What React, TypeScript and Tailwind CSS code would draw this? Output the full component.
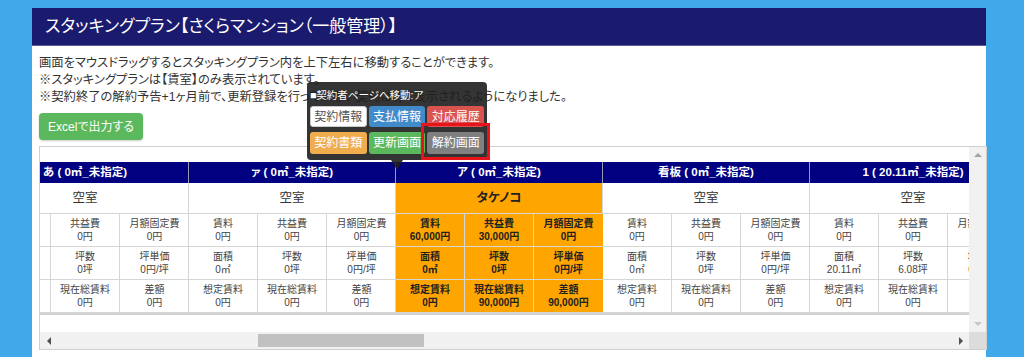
import React from 'react';

type Cell = { label: string; value: string };
type Group = { title: string; status: string; rows: Cell[][]; active?: boolean };

const empty = (area: string, tsubo: string): Cell[][] => [
    [{ label: '賃料', value: '0円' }, { label: '共益費', value: '0円' }, { label: '月額固定費', value: '0円' }],
    [{ label: '面積', value: area }, { label: '坪数', value: tsubo }, { label: '坪単価', value: '0円/坪' }],
    [{ label: '想定賃料', value: '0円' }, { label: '現在総賃料', value: '0円' }, { label: '差額', value: '0円' }],
];

const groups: Group[] = [
    { title: 'あ ( 0㎡_未指定)', status: '空室', rows: empty('0㎡', '0坪') },
    { title: 'ァ ( 0㎡_未指定)', status: '空室', rows: empty('0㎡', '0坪') },
    {
        title: 'ア ( 0㎡_未指定)',
        status: 'タケノコ',
        active: true,
        rows: [
            [{ label: '賃料', value: '60,000円' }, { label: '共益費', value: '30,000円' }, { label: '月額固定費', value: '0円' }],
            [{ label: '面積', value: '0㎡' }, { label: '坪数', value: '0坪' }, { label: '坪単価', value: '0円/坪' }],
            [{ label: '想定賃料', value: '0円' }, { label: '現在総賃料', value: '90,000円' }, { label: '差額', value: '90,000円' }],
        ],
    },
    { title: '看板 ( 0㎡_未指定)', status: '空室', rows: empty('0㎡', '0坪') },
    {
        title: '1 ( 20.11㎡_未指定)',
        status: '空室',
        rows: [
            [{ label: '賃料', value: '0円' }, { label: '共益費', value: '0円' }, { label: '月額固定費', value: '0円' }],
            [{ label: '面積', value: '20.11㎡' }, { label: '坪数', value: '6.08坪' }, { label: '坪単価', value: '0円/坪' }],
            [{ label: '想定賃料', value: '0円' }, { label: '現在総賃料', value: '0円' }, { label: '差額', value: '' }],
        ],
    },
];

function GroupColumn({ g }: { g: Group }) {
    return (
        <div className="flex flex-col w-[207px] shrink-0 border-r border-[#d6d6d6]">
            <div className="h-[21px] bg-[#000080] text-white font-bold text-[11.5px] flex items-center justify-center whitespace-nowrap border-r border-[#9a9ab8] -mr-px">
                {g.title}
            </div>
            <div
                className={`h-[31px] flex items-center justify-center text-[12.5px] border-b border-[#d6d6d6] ${
                    g.active ? 'bg-[#ffa500] font-bold text-[#222]' : 'bg-white text-[#333]'
                }`}
            >
                {g.status}
            </div>
            {g.rows.map((row, ri) => (
                <div key={ri} className="h-[33px] flex border-b border-[#d6d6d6]">
                    {row.map((c, ci) => (
                        <div
                            key={ci}
                            className={`w-[69px] shrink-0 flex flex-col items-center justify-center text-[10px] leading-[13px] whitespace-nowrap ${
                                ci < 2 ? 'border-r border-[#d6d6d6]' : ''
                            } ${g.active ? 'bg-[#ffa500] font-bold text-[#222]' : 'text-[#444]'}`}
                        >
                            {c.value !== '' && (
                                <>
                                    <span>{c.label}</span>
                                    <span>{c.value}</span>
                                </>
                            )}
                        </div>
                    ))}
                </div>
            ))}
        </div>
    );
}

export default function App() {
    return (
        <div className="min-h-[357px] bg-[#3fa9ea] pt-[8px] font-['Liberation_Sans','Noto_Sans_CJK_JP',sans-serif] [font-feature-settings:'palt'] relative overflow-hidden">
            <div className="ml-[32px] w-[954px] bg-white h-[349px]">
                <div className="h-[38px] bg-[#1a1a6e] flex items-center pl-[13px] text-white text-[17px] border-b border-[#5a5a9a]">
                    スタッキングプラン【さくらマンション（一般管理）】
                </div>
                <div className="pl-[7px] pr-[7px] pt-[9px]">
                    <div className="text-[12.3px] leading-[17px] text-[#333]">
                        <p>画面をマウスドラッグするとスタッキングプラン内を上下左右に移動することができます。</p>
                        <p>※スタッキングプランは【賃室】のみ表示されています。</p>
                        <p>※契約終了の解約予告+1ヶ月前で、更新登録を行っていない契約は赤く表示されるようになりました。</p>
                    </div>
                    <button className="mt-[7px] w-[104px] h-[27px] bg-[#5cb85c] rounded-[4px] text-white text-[12px] shadow-[0_1px_2px_rgba(0,0,0,0.2)]">
                        Excelで出力する
                    </button>
                    <div className="mt-[6px] w-[948px] h-[204px] border border-[#cfcfcf] flex flex-col">
                        <div className="flex flex-1 min-h-0">
                            <div className="flex-1 overflow-hidden">
                                <div className="h-[15px]" />
                                <div className="flex ml-[-58px] border-b-2 border-[#d0d0d0] w-max">
                                    {groups.map((g, i) => (
                                        <GroupColumn key={i} g={g} />
                                    ))}
                                </div>
                            </div>
                            <div className="w-[17px] bg-[#f1f1f1] flex flex-col items-center justify-between py-[6px]">
                                <div className="w-0 h-0 border-x-[4px] border-x-transparent border-b-[4px] border-b-[#a3a3a3]" />
                                <div className="w-0 h-0 border-x-[4px] border-x-transparent border-t-[4px] border-t-[#c8c8c8]" />
                            </div>
                        </div>
                        <div className="h-[17px] flex">
                            <div className="flex-1 bg-[#f1f1f1] flex items-center">
                                <div className="w-[17px] flex justify-center">
                                    <div className="w-0 h-0 border-y-[4px] border-y-transparent border-r-[4px] border-r-[#505050]" />
                                </div>
                                <div className="ml-[201px] w-[166px] h-[13px] bg-[#c1c1c1]" />
                                <div className="flex-1" />
                                <div className="w-[17px] flex justify-center">
                                    <div className="w-0 h-0 border-y-[4px] border-y-transparent border-l-[4px] border-l-[#505050]" />
                                </div>
                            </div>
                            <div className="w-[17px] bg-[#dcdcdc]" />
                        </div>
                    </div>
                </div>
            </div>

            {/* popover over the table */}
            <div className="absolute left-[307px] top-[82px] w-[180px] h-[78px] bg-[#1e1e1e]/90 rounded-[4px] px-[3px] pt-[5px]">
                <div className="text-white text-[10.5px] leading-[16px] whitespace-nowrap">■契約者ページへ移動:ア</div>
                <div className="grid grid-cols-3 gap-x-[2px] gap-y-[5px] mt-[3px] text-[12px]">
                    <button className="h-[21px] rounded-[3px] bg-white border border-[#ccc] text-[#555]">契約情報</button>
                    <button className="h-[21px] rounded-[3px] bg-[#428bca] text-white">支払情報</button>
                    <button className="h-[21px] rounded-[3px] bg-[#d9534f] text-white">対応履歴</button>
                    <button className="h-[22px] rounded-[3px] bg-[#f0ad4e] text-white">契約書類</button>
                    <button className="h-[22px] rounded-[3px] bg-[#5cb85c] text-white">更新画面</button>
                    <button className="h-[22px] rounded-[3px] bg-[#808080] text-white">解約画面</button>
                </div>
                <div className="absolute left-[84px] top-[78px] w-0 h-0 border-x-[6px] border-x-transparent border-t-[10px] border-t-[#1e1e1e]/90" />
            </div>
            <div className="absolute left-[421px] top-[123px] w-[69px] h-[37px] border-[3px] border-[#e8141b]" />
        </div>
    );
}
